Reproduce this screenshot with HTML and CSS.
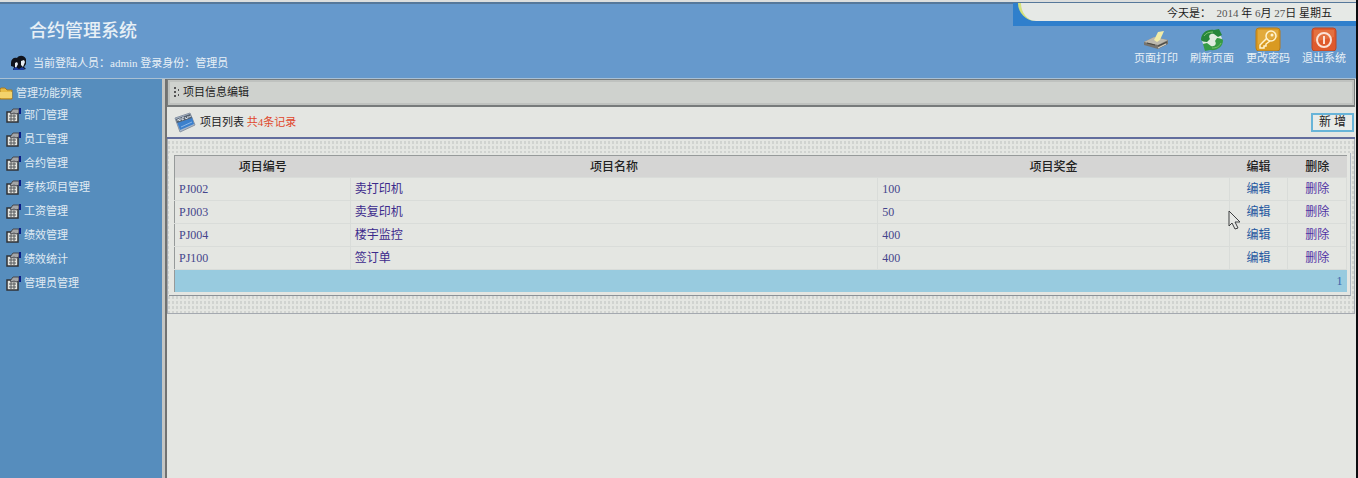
FILE: index.html
```html
<!DOCTYPE html>
<html lang="zh-CN">
<head>
  <meta charset="UTF-8" />
  <title>合约管理系统</title>
  <link rel="stylesheet" href="styles.css">
</head>
<body>

  <!-- shared icons -->
  <svg class="sprite" aria-hidden="true">
    <symbol id="icon-item" viewBox="0 0 16 15">
      <path d="M1 4h11v10H1z" fill="#e4e4de" stroke="#303236" stroke-width="1.5"/>
      <path d="M3 8h7M3 11h7M5 6v7M8 6v7" stroke="#54585c"/>
      <path d="M4 5l3-4h6v4l-3 1-2-1-2 1z" fill="#a4a6a8" stroke="#44464c"/>
      <path d="M13 0h2v6h-2z" fill="#0a1c86"/>
    </symbol>
  </svg>

  <header class="header">
    <div class="brand">
      <h1>合约管理系统</h1>
      <div class="user">
        <svg width="17" height="16" viewBox="0 0 17 16">
          <path d="M1 8c0-4 3-6 6-5 2-3 7-3 9 1v5l-2 3 2 2-5 1H3l1-3-3-1z" fill="#10131c"/>
          <path d="M5 8l2-1 1 2-2 4-1-1zM11 6l3-1 1 2-2 5-2-2z" fill="#e8eef4"/>
          <path d="M3 14l3-2 3 2 3-2 3 2-2 1H4z" fill="#1c3c9c"/>
        </svg>
        <span>当前登陆人员<span class="colon">：</span>admin 登录身份<span class="colon">：</span>管理员</span>
      </div>
    </div>
    <div class="top-right">
      <div class="date-wrap">
        <div class="date">今天是<span class="colon">：</span>&nbsp; <span class="num">2014</span> 年 <span class="num">6</span>月 <span class="num">27</span>日 星期五</div>
      </div>
      <nav class="tools">
        <a href="#">
          <svg width="26" height="24" viewBox="0 0 26 24">
            <path d="M1 15l10-5 14 3v4l-10 5L1 18z" fill="#77746e"/>
            <path d="M1 15l10-5 14 3-10 5z" fill="#bdb9ae"/>
            <path d="M11 13l4-8 6-1-4 9-3 2z" fill="#f2eca8"/>
            <path d="M4 16l8 2M15 19l9-4" stroke="#48463f"/>
            <path d="M15 21l8-4" stroke="#e4dfcf"/>
          </svg>
          页面打印
        </a>
        <a href="#">
          <svg width="26" height="24" viewBox="0 0 26 24">
            <ellipse cx="13" cy="13" rx="10" ry="9" fill="#e0ecdf"/>
            <path d="M2 13C2 6 8 2 15 3l5-1 3 6-4 2-4-3c-4-1-6 2-4 5l-3 3c-3 0-5-1-6-2z" fill="#27863a"/>
            <path d="M24 13c0 7-6 11-13 10l-5 1-2-7 4-1 4 3c4 1 6-2 4-5l2-3c3 0 5 1 6 2z" fill="#369b44"/>
            <path d="M5 9c2-3 5-4 9-4M22 16c-2 4-5 5-9 5" stroke="#7cc46c" fill="none"/>
          </svg>
          刷新页面
        </a>
        <a href="#">
          <svg width="26" height="24" viewBox="0 0 26 24">
            <rect x="1" y="1" width="24" height="23" rx="3" fill="#d99a22" stroke="#b57b1c"/>
            <path d="M3 3h20v7L3 17z" fill="#e2aa3c"/>
            <circle cx="16" cy="9" r="5" fill="none" stroke="#fff3cf" stroke-width="1.5"/>
            <path d="M12 11l-7 7v3h4v-2h2v-2l4-3" fill="none" stroke="#fff3cf" stroke-width="1.5"/>
            <circle cx="17" cy="8" r="1.5" fill="#fff3cf"/>
          </svg>
          更改密码
        </a>
        <a href="#">
          <svg width="26" height="24" viewBox="0 0 26 24">
            <rect x="1" y="1" width="24" height="23" rx="3" fill="#df5a2c" stroke="#b8492a"/>
            <path d="M3 3h20v7L3 15z" fill="#e4703f"/>
            <circle cx="13" cy="13" r="7" fill="none" stroke="#fbe2d6" stroke-width="2"/>
            <path d="M13 9v8" stroke="#fbe2d6" stroke-width="2"/>
          </svg>
          退出系统
        </a>
      </nav>
    </div>
  </header>

  <div class="layout">
    <aside class="sidebar">
      <div class="menu-title">
        <svg width="13" height="13" viewBox="0 0 13 13">
          <path d="M0 2l1-1h4l2 2h5v9H0z" fill="#e9bd45" stroke="#a87a20"/>
          <path d="M0 5h12v6H0z" fill="#f3d36c"/>
        </svg>
        管理功能列表
      </div>
      <ul class="menu">
        <li><a href="#"><svg width="16" height="15"><use href="#icon-item"/></svg>部门管理</a></li>
        <li><a href="#"><svg width="16" height="15"><use href="#icon-item"/></svg>员工管理</a></li>
        <li><a href="#"><svg width="16" height="15"><use href="#icon-item"/></svg>合约管理</a></li>
        <li><a href="#"><svg width="16" height="15"><use href="#icon-item"/></svg>考核项目管理</a></li>
        <li><a href="#"><svg width="16" height="15"><use href="#icon-item"/></svg>工资管理</a></li>
        <li><a href="#"><svg width="16" height="15"><use href="#icon-item"/></svg>绩效管理</a></li>
        <li><a href="#"><svg width="16" height="15"><use href="#icon-item"/></svg>绩效统计</a></li>
        <li><a href="#"><svg width="16" height="15"><use href="#icon-item"/></svg>管理员管理</a></li>
      </ul>
    </aside>

    <main class="main">
      <div class="page-title">
        <svg width="7" height="12" viewBox="0 0 7 12">
          <path d="M1 1h2v2H1zM1 5h2v2H1zM1 9h2v2H1zM5 3h1v2H5zM5 8h1v2H5z" fill="#555"/>
        </svg>
        项目信息编辑
      </div>
      <div class="toolbar">
        <svg width="22" height="21" viewBox="0 0 22 21">
          <path d="M1 6l15-5 5 12-15 7z" fill="#a9b8cc" stroke="#8894a4"/>
          <path d="M3 10l15-5 2 7-14 6z" fill="#3c80cc"/>
          <path d="M2 7l14-5 2 4-15 5z" fill="#56626e"/>
          <path d="M4 9V7l2 2V6M8 8l2-1M8 6v2M8 6l2-1M11 5l1 2 1-1 1 0V4M15 5l2-1" stroke="#d4dce6" fill="none"/>
          <path d="M7 15l11-5" stroke="#8cb8e8"/>
        </svg>
        <span>项目列表 <span class="count">共4条记录</span></span>
        <button type="button" class="add">新 增</button>
      </div>

      <div class="panel">
        <div class="frame">
          <table class="grid">
            <colgroup>
              <col class="c-code"><col class="c-name"><col class="c-bonus"><col class="c-edit"><col class="c-del">
            </colgroup>
            <thead>
              <tr><th>项目编号</th><th>项目名称</th><th>项目奖金</th><th>编辑</th><th>删除</th></tr>
            </thead>
            <tbody>
              <tr><td class="num">PJ002</td><td class="name">卖打印机</td><td class="num">100</td><td class="op"><a href="#">编辑</a></td><td class="op del"><a href="#">删除</a></td></tr>
              <tr><td class="num">PJ003</td><td class="name">卖复印机</td><td class="num">50</td><td class="op"><a href="#">编辑</a></td><td class="op del"><a href="#">删除</a></td></tr>
              <tr><td class="num">PJ004</td><td class="name">楼宇监控</td><td class="num">400</td><td class="op"><a href="#">编辑</a></td><td class="op del"><a href="#">删除</a></td></tr>
              <tr><td class="num">PJ100</td><td class="name">签订单</td><td class="num">400</td><td class="op"><a href="#">编辑</a></td><td class="op del"><a href="#">删除</a></td></tr>
            </tbody>
            <tfoot>
              <tr><td colspan="5">1</td></tr>
            </tfoot>
          </table>
        </div>
      </div>
    </main>
  </div>

  <svg class="cursor" width="13" height="21" viewBox="0 0 13 21">
    <path d="M1 1v15l3-3 3 6 3-1-3-6h5z" fill="#e6e8e5" stroke="#3c3e40"/>
  </svg>

</body>
</html>
```
FILE: styles.css
```css
* {
  box-sizing: border-box;
}
body {
  margin: 0;
  min-height: 100vh;
  display: flex;
  flex-direction: column;
  position: relative;
  background: #e4e6e2;
  border-right: 2px solid #0c0c10;
  font-family: "Liberation Serif", "Noto Sans CJK SC", serif;
  font-size: 12px;
  line-height: 16px;
  color: #222;
}
a {
  color: inherit;
  text-decoration: none;
}
svg {
  flex: none;
}
.sprite {
  display: none;
}
.colon {
  font-family: "Noto Sans CJK TC", sans-serif;
}

/* header */
.header {
  display: flex;
  justify-content: space-between;
  height: 79px;
  background: #6699cc;
  border-top: 2px solid #dcdedd;
  border-bottom: 1px solid #a9c0d4;
  box-shadow: inset 0 2px 0 #56789a;
  color: #e8f0f6;
}
.brand {
  padding: 17px 0 0 10px;
}
.brand h1 {
  margin: 0 0 11px 19px;
  font-size: 18px;
  line-height: 24px;
  font-weight: 500;
}
.user {
  display: flex;
  align-items: center;
  gap: 6px;
  font-size: 11px;
}
.top-right {
  width: 343px;
  display: flex;
  flex-direction: column;
  align-items: flex-end;
  padding-top: 1px;
}
.date-wrap {
  width: 100%;
  padding: 0 0 5px 5px;
  background: #2f7fcc;
}
.date {
  height: 18px;
  padding-right: 24px;
  text-align: right;
  font-size: 11px;
  line-height: 18px;
  color: #1c1c1c;
  background: #e6e9e6;
  border-left: 3px solid #d4e27a;
  border-bottom-left-radius: 18px;
}
.date .num {
  color: #555;
}
.tools {
  display: flex;
  gap: 12px;
  padding: 1px 10px 0 0;
}
.tools a {
  display: flex;
  flex-direction: column;
  align-items: center;
  font-size: 11px;
  line-height: 14px;
}

/* body */
.layout {
  flex: 1;
  display: flex;
}
.sidebar {
  width: 167px;
  flex: none;
  padding-top: 6px;
  background: #568dbd;
  border-right: 5px ridge #c4c6c4;
  font-size: 11px;
  color: #e0ebf3;
}
.menu-title {
  display: flex;
  align-items: center;
  gap: 3px;
}
.menu {
  list-style: none;
  margin: 0;
  padding: 2px 0 0 6px;
}
.menu a {
  display: flex;
  align-items: center;
  gap: 2px;
  height: 24px;
}
.main {
  flex: 1;
  min-width: 0;
  padding-right: 1px;
}
.page-title {
  display: flex;
  align-items: center;
  gap: 3px;
  height: 28px;
  padding: 0 5px 2px;
  background: #cfd2ce;
  border: 1px solid #777b7b;
  border-bottom-width: 2px;
  box-shadow: inset 0 0 0 2px #bfc2bf;
  font-size: 11px;
}
.toolbar {
  display: flex;
  align-items: center;
  gap: 4px;
  height: 32px;
  padding: 0 1px 0 7px;
  border-bottom: 2px solid #626d9d;
  font-size: 11px;
}
.count {
  color: #e0482c;
}
.add {
  margin-left: auto;
  width: 43px;
  height: 19px;
  padding: 0;
  border: 2px solid #68b4d8;
  background: #e8ebe8;
  font: inherit;
  font-size: 12px;
  line-height: 14px;
  color: #222;
}

/* list */
.panel {
  padding: 14px 3px 17px 1px;
  border: 1px solid #a4a9b0;
  border-top: 0;
  background-color: #e4e6e2;
  background-image:
    linear-gradient(90deg, transparent 2px, #e4e6e2 2px),
    linear-gradient(#e4e6e2 2px, #d0d3d0 2px);
  background-size: 4px 5px;
}
.frame {
  padding: 2px 3px 3px 5px;
  background: #e4e6e2;
  border-right: 1px solid #aab4c2;
  border-bottom: 1px solid #8c9298;
}
.grid {
  width: 100%;
  table-layout: fixed;
  border-collapse: collapse;
  border-top: 1px solid #969a9a;
  border-left: 1px solid #969a9a;
}
.c-code {
  width: 15%;
}
.c-name {
  width: 45%;
}
.c-bonus {
  width: 30%;
}
.c-edit,
.c-del {
  width: 5%;
}
.grid th,
.grid td {
  height: 23px;
  padding: 0 4px;
  text-align: left;
}
.grid thead th,
.grid tfoot td {
  height: 22px;
}
.grid th {
  background: #d5d5d4;
  font-weight: 500;
  text-align: center;
}
.grid tbody td {
  border: 1px solid #d9dcd9;
  color: #44458c;
}
.grid tbody td:first-child {
  border-left-color: #969a9a;
}
.grid .name {
  color: #3c2a8c;
}
.grid .op {
  text-align: center;
  color: #2458a0;
}
.grid .del {
  color: #5233a4;
}
.grid tfoot td {
  background: #98cbdf;
  text-align: right;
  color: #3a62a8;
}

/* mouse pointer lies over the list */
.cursor {
  position: absolute;
  left: 1228px;
  top: 210px;
}
```
